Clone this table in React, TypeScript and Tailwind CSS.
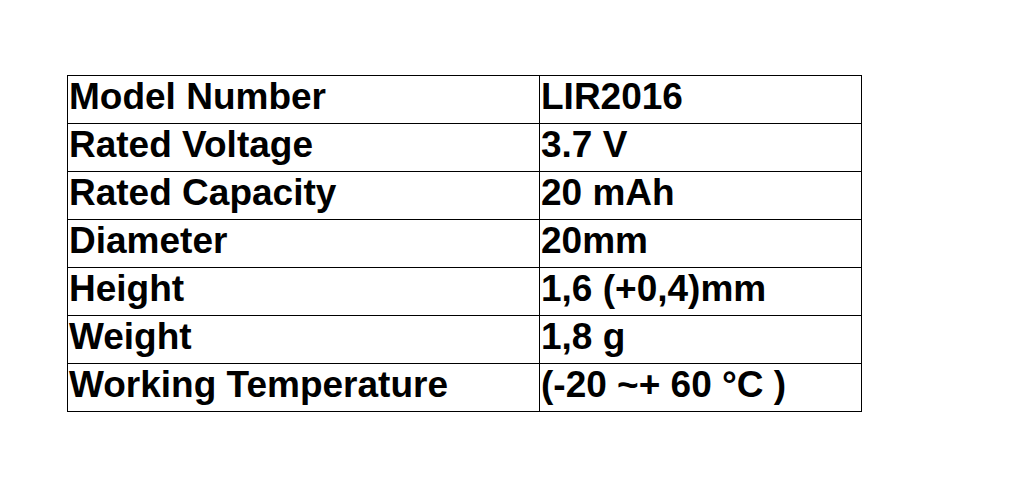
const rows: [string, string][] = [
  ["Model Number", "LIR2016"],
  ["Rated Voltage", "3.7 V"],
  ["Rated Capacity", "20 mAh"],
  ["Diameter", "20mm"],
  ["Height", "1,6 (+0,4)mm"],
  ["Weight", "1,8 g"],
  ["Working Temperature", "(-20 ~+ 60 °C )"],
];

export default function App() {
  return (
    <div className="w-[1024px] h-[487px] bg-white pl-[67px] pt-[75px] font-['Liberation_Sans',Arial,sans-serif]">
      <table className="border-collapse text-black">
        <tbody>
          {rows.map(([label, value]) => (
            <tr key={label}>
              <td className="w-[472px] h-[48px] border border-black align-top pl-[1px] pt-[4px] text-[37px] leading-[33px] font-bold">
                {label}
              </td>
              <td className="w-[322px] h-[48px] border border-black align-top pl-[1px] pt-[4px] text-[37px] leading-[33px] font-bold">
                {value}
              </td>
            </tr>
          ))}
        </tbody>
      </table>
    </div>
  );
}
